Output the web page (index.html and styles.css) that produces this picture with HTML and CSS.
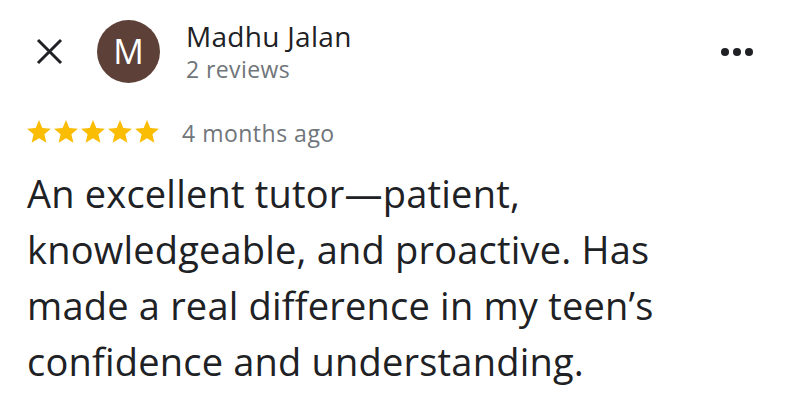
FILE: index.html
```html
<!DOCTYPE html>
<html lang="en">
<head>
<meta charset="utf-8">
<title>Review</title>
<link rel="stylesheet" href="styles.css">
</head>
<body>
<main class="review">
  <header class="review-header">
    <button class="icon-btn close-btn" aria-label="Close">
      <svg width="27" height="27" viewBox="0 0 27 27"><path d="M2 2L25 25M25 2L2 25" stroke="#202124" stroke-width="3" fill="none"/></svg>
    </button>
    <div class="avatar">M</div>
    <div class="author">
      <div class="author-name">Madhu Jalan</div>
      <div class="author-meta">2 reviews</div>
    </div>
    <button class="icon-btn more-btn" aria-label="More options">
      <span class="dot"></span><span class="dot"></span><span class="dot"></span>
    </button>
  </header>
  <div class="rating-row">
    <div class="stars">
      <svg class="star" viewBox="2 2 20 19.3"><path d="M12 17.27L18.18 21l-1.64-7.03L22 9.24l-7.19-.61L12 2 9.19 8.63 2 9.24l5.46 4.73L5.82 21z"/></svg>
      <svg class="star" viewBox="2 2 20 19.3"><path d="M12 17.27L18.18 21l-1.64-7.03L22 9.24l-7.19-.61L12 2 9.19 8.63 2 9.24l5.46 4.73L5.82 21z"/></svg>
      <svg class="star" viewBox="2 2 20 19.3"><path d="M12 17.27L18.18 21l-1.64-7.03L22 9.24l-7.19-.61L12 2 9.19 8.63 2 9.24l5.46 4.73L5.82 21z"/></svg>
      <svg class="star" viewBox="2 2 20 19.3"><path d="M12 17.27L18.18 21l-1.64-7.03L22 9.24l-7.19-.61L12 2 9.19 8.63 2 9.24l5.46 4.73L5.82 21z"/></svg>
      <svg class="star" viewBox="2 2 20 19.3"><path d="M12 17.27L18.18 21l-1.64-7.03L22 9.24l-7.19-.61L12 2 9.19 8.63 2 9.24l5.46 4.73L5.82 21z"/></svg>
    </div>
    <span class="date">4 months ago</span>
  </div>
  <p class="review-text">An excellent tutor—patient, knowledgeable, and proactive. Has made a real difference in my teen’s confidence and understanding.</p>
</main>
</body>
</html>
```

FILE: styles.css
```css
* { box-sizing: border-box; }
html, body { margin: 0; padding: 0; background: #ffffff; }
body {
  font-family: "Open Sans", Roboto, Arial, sans-serif;
  color: #202124;
  width: 786px;
  height: 413px;
  overflow: hidden;
}
.review {
  padding: 20px 33px 0 27px;
}
.review-header {
  display: flex;
  align-items: flex-start;
  height: 63px;
}
.icon-btn {
  border: 0;
  background: none;
  padding: 0;
  margin: 0;
  display: flex;
  align-items: center;
  cursor: pointer;
}
.close-btn {
  align-self: center;
  margin-left: 9px;
  width: 27px;
  height: 27px;
}
.close-btn svg { display: block; }
.avatar {
  margin-left: 34px;
  width: 63px;
  height: 63px;
  border-radius: 50%;
  background: #5d4037;
  color: #ffffff;
  font-size: 34px;
  line-height: 63px;
  text-align: center;
  flex-shrink: 0;
}
.author {
  margin-left: 26px;
  margin-top: 1px;
}
.author-name {
  font-size: 28px;
  line-height: 30px;
  letter-spacing: 0.3px;
  color: #202124;
}
.author-meta {
  font-size: 23px;
  line-height: 32px;
  letter-spacing: 0.4px;
  margin-top: 2px;
  color: #70757a;
}
.more-btn {
  margin-left: auto;
  align-self: center;
  gap: 4px;
}
.dot {
  width: 8px;
  height: 8px;
  border-radius: 50%;
  background: #202124;
  display: block;
}
.rating-row {
  display: flex;
  align-items: flex-start;
  margin-top: 37px;
  height: 24px;
}
.stars {
  display: flex;
  gap: 3px;
}
.star {
  width: 24px;
  height: 23px;
  display: block;
  fill: #fbbc04;
}
.date {
  margin-left: 23px;
  font-size: 23px;
  line-height: 24px;
  letter-spacing: 0.5px;
  padding-top: 1px;
  color: #70757a;
}
.review-text {
  margin: 21px 0 0 0;
  font-size: 38px;
  line-height: 56px;
  letter-spacing: 0.2px;
  color: #202124;
}
```
